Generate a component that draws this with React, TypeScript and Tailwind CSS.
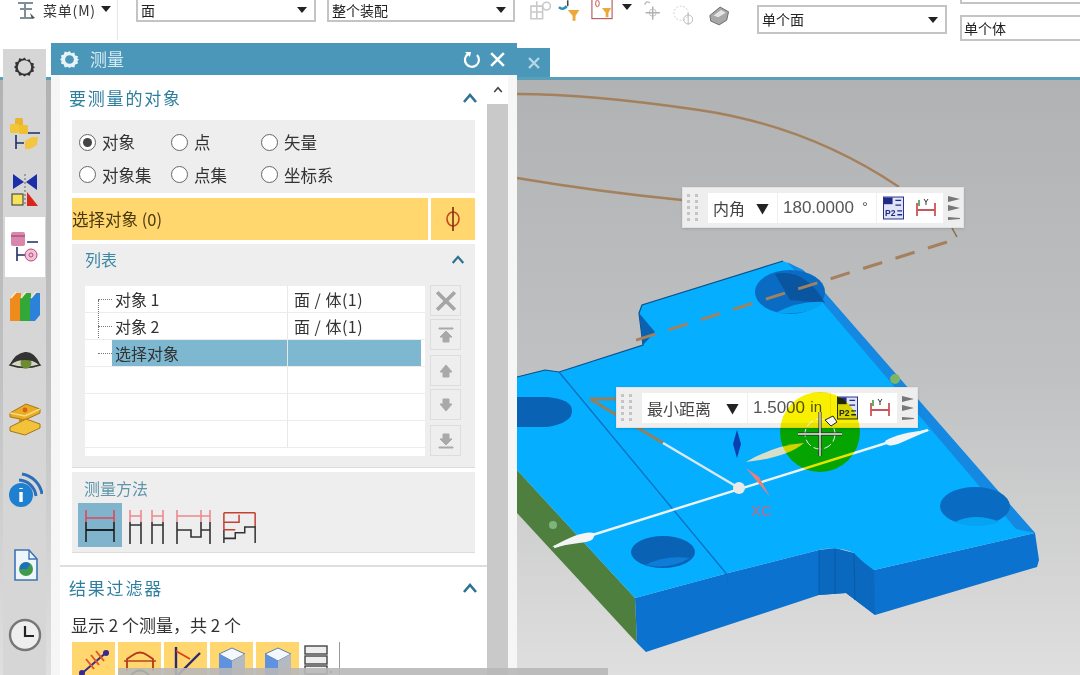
import type { ReactNode } from "react";

const cjk = "font-['Noto_Sans_CJK_SC','Noto_Sans',sans-serif]";

const Icon = ({ children, className = "w-9 h-9", box = "0 0 36 36" }: { children: ReactNode; className?: string; box?: string }) => (
  <svg viewBox={box} className={className} fill="none">{children}</svg>
);

const Caret = ({ className = "" }: { className?: string }) => (
  <svg viewBox="0 0 10 6" className={`w-[10px] h-[6px] ${className}`}><path d="M0 0h10L5 6z" fill="#222" /></svg>
);

const Chevron = ({ className = "w-[16px] h-[10px]", color = "#2d7390" }: { className?: string; color?: string }) => (
  <svg viewBox="0 0 16 10" className={className} fill="none"><path d="M2 9l6-7 6 7" stroke={color} strokeWidth="2.6" /></svg>
);

const Radio = ({ label, checked = false }: { label: string; checked?: boolean }) => (
  <div className="flex items-center gap-[6px]">
    <span className="w-[17px] h-[17px] rounded-full border-[1.5px] border-[#666] bg-white flex items-center justify-center">
      {checked && <span className="w-[9px] h-[9px] rounded-full bg-[#444]" />}
    </span>
    <span className="text-[16.5px] leading-none text-[#333]">{label}</span>
  </div>
);

const Select = ({ label, className }: { label: string; className: string }) => (
  <div className={`shrink-0 border-2 border-[#c4c4c4] bg-white flex items-center justify-between pl-[3px] pr-[7px] text-[14px] text-[#222] ${className}`}>
    <span>{label}</span>
    <Caret />
  </div>
);

const Gear = ({ color = "#333", hole = "#d6d6d6", r = 4.6 }: { color?: string; hole?: string; r?: number }) => (
  <svg viewBox="0 0 20 20" className="w-full h-full">
    <path d="M10 1l2 2.4 3-.7 1 3 3 1-.7 2.6L20 10l-1.7 1.7.7 2.6-3 1-1 3-3-.7L10 19l-2-1.4-3 .7-1-3-3-1 .7-2.6L0 10l1.7-1.7L1 5.7l3-1 1-3 3 .7z" fill={color} />
    <circle cx="10" cy="10" r={r} fill={hole} />
  </svg>
);

const SideBar = () => (
  <div className="absolute left-[3px] top-[49px] bottom-0 w-[43px] bg-[#d6d6d6] flex flex-col items-center">
    <div className="w-[21px] h-[36px] flex items-center"><Gear hole="#d6d6d6" r={6.4} /></div>
    <div className="mt-[32px]">
      <Icon>
        <rect x="8" y="1" width="8" height="8" rx="1.5" fill="#e9b52a" />
        <rect x="3" y="7" width="9" height="9" rx="1.5" fill="#f2c63a" />
        <rect x="12" y="8" width="9" height="9" rx="1.5" fill="#f0c030" />
        <path d="M21 16h12M9 18v14M9 26h8" stroke="#1d2f66" strokeWidth="1.6" />
        <path d="M18 24l7-4h6l-1 8-7 4h-5z" fill="#f4c53e" />
      </Icon>
    </div>
    <div className="mt-[19px]">
      <Icon>
        <path d="M6 2l11 8L6 17zM30 2l-11 8 11 8z" fill="#1c2ea8" />
        <path d="M18 2v32" stroke="#666" strokeDasharray="2 2" />
        <rect x="5" y="22" width="11" height="11" fill="#f6e35a" stroke="#333" />
        <path d="M20 20l11 14H20z" fill="#d8261c" />
      </Icon>
    </div>
    <div className="mt-[9px] w-[40px] h-[60px] ml-[1px] bg-white flex items-center justify-center">
      <Icon>
        <rect x="4" y="3" width="14" height="14" rx="2" fill="#d987ad" />
        <path d="M4 7h14" stroke="#8c3f68" />
        <path d="M20 13h11M10 18v14M10 26h8" stroke="#1d2f66" strokeWidth="1.6" />
        <circle cx="24" cy="26" r="6" fill="#f0c4d6" stroke="#b9447f" />
        <circle cx="24" cy="26" r="2" stroke="#b9447f" />
      </Icon>
    </div>
    <div className="mt-[10px]">
      <Icon>
        <path d="M3 12l5-6h6v28H3z" fill="#ef8a1d" />
        <path d="M13 12l5-6h6v28H13z" fill="#34a836" />
        <path d="M23 12l5-6h5v22l-5 6h-5z" fill="#2b82d9" />
        <path d="M4 11l5-6M14 11l5-6M24 11l5-6" stroke="#f5e9c8" strokeWidth="1.6" />
      </Icon>
    </div>
    <div className="mt-[19px]">
      <Icon>
        <path d="M3 23q14-14 30 0-15 5-30 0z" fill="#d5d8be" stroke="#333" strokeWidth="1.5" />
        <circle cx="19" cy="21" r="5.5" fill="#6d8b32" />
        <path d="M3 22q6-11 15-12t15 12q-15-8-30 0z" fill="#333" />
      </Icon>
    </div>
    <div className="mt-[22px]">
      <Icon>
        <path d="M3 13l16-9 14 5v4L18 20 3 17z" fill="#e9ac24" stroke="#a8741a" />
        <path d="M3 13l15 3 15-7" stroke="#f7dc82" strokeWidth="1.4" />
        <path d="M12 20l10 2" stroke="#c88a1e" strokeWidth="3" />
        <path d="M3 27l16-8 14 5v4l-15 7-15-4z" fill="#f1c23a" stroke="#a8741a" />
        <circle cx="18" cy="10" r="2.4" fill="#d8641c" />
      </Icon>
    </div>
    <div className="mt-[36px]">
      <Icon>
        <circle cx="14" cy="23" r="12" fill="#1f7fd1" />
        <path d="M14 16v1M14 20v10" stroke="#fff" strokeWidth="3.4" />
        <path d="M12 8a18 18 0 0 1 17 16M15 2a24 24 0 0 1 20 20" stroke="#2c6fb8" strokeWidth="3" />
      </Icon>
    </div>
    <div className="mt-[39px]">
      <Icon>
        <path d="M8 3h14l8 9v21H8z" fill="#eef5fb" stroke="#3e74b5" strokeWidth="1.6" />
        <path d="M22 3v9h8" stroke="#3e74b5" strokeWidth="1.4" />
        <circle cx="19" cy="22" r="7" fill="#3f9a4c" />
        <path d="M13 22a6 6 0 0 1 10-5l-3 5z" fill="#1f6fc0" />
      </Icon>
    </div>
    <div className="mt-[34px]">
      <Icon>
        <circle cx="18" cy="18" r="15" fill="#eee" stroke="#777" strokeWidth="2.4" />
        <path d="M18 9v10h9" stroke="#222" strokeWidth="2.2" />
      </Icon>
    </div>
  </div>
);

const Row = ({ name, value, selected = false, tree = false }: { name?: string; value?: string; selected?: boolean; tree?: boolean }) => (
  <div className="h-[27px] flex border-b border-[#ececec] text-[16px] text-[#333] relative">
    {tree && <span className="absolute left-[13px] top-[13px] w-[14px] border-t border-dotted border-[#777]" />}
    <div className={`w-[203px] pl-[30px] flex items-center border-r border-[#e8e8e8] ${selected ? "bg-[linear-gradient(90deg,white_27px,#7db7d0_27px)]" : ""}`}>{name}</div>
    <div className={`w-[133px] pl-[6px] flex items-center tracking-[0.5px] ${selected ? "bg-[#7db7d0]" : ""}`}>{value}</div>
  </div>
);

const ListButton = ({ d, mt }: { d: string; mt: string }) => (
  <div className={`w-[31px] h-[31px] bg-[#eeeeee] border border-[#dddddd] flex items-center justify-center ${mt}`}>
    <svg viewBox="0 0 20 20" className="w-[20px] h-[20px]"><path d={d} fill="#a9a9a9" stroke="#a9a9a9" strokeWidth="1" /></svg>
  </div>
);

const MethodIcon = ({ children, w = 38, className = "" }: { children: ReactNode; w?: number; className?: string }) => (
  <svg viewBox="0 0 38 34" width={w} height="34" fill="none" className={className}>{children}</svg>
);

const ResultBox = ({ children }: { children: ReactNode }) => (
  <div className="w-[43px] h-[40px] bg-[#ffd76e] flex items-start justify-center pt-[3px]">{children}</div>
);

const Cube = () => (
  <Icon className="w-[34px] h-[34px]" box="0 0 34 34">
    <path d="M17 3l13 6-13 7-13-7z" fill="#f4f7fb" stroke="#5a7fb5" />
    <path d="M4 9l13 7v18H4z" fill="#5f93e0" />
    <path d="M30 9l-13 7v18h13z" fill="#b5b9c2" />
  </Icon>
);

const Dialog = () => (
  <div className={`absolute left-[51px] top-[43px] w-[466px] h-[632px] flex flex-col bg-[#f6f6f6] ${cjk}`}>
    <div className="h-[32px] shrink-0 bg-[#4a97b9] flex items-center pl-[9px] pr-[11px] text-white">
      <div className="w-[19px] h-[19px]"><Gear color="#e8f3f8" hole="#4a97b9" /></div>
      <span className="ml-[11px] text-[17px] text-[#d7e9f1]">测量</span>
      <svg viewBox="0 0 20 20" className="ml-auto w-[20px] h-[20px]" fill="none"><path d="M6 5a7 7 0 1 0 9 1" stroke="#fff" strokeWidth="2.2" /><path d="M3 3l6 0-1 5z" fill="#fff" /></svg>
      <svg viewBox="0 0 16 16" className="ml-[7px] w-[17px] h-[17px]" fill="none"><path d="M2 2l12 12M14 2L2 14" stroke="#fff" strokeWidth="2.4" /></svg>
    </div>
    <div className="flex-1 flex min-h-0">
      <div className="ml-[9px] w-[427px] bg-white px-[12px] flex flex-col overflow-hidden">
        <div className="h-[45px] shrink-0 -ml-[3px] -mr-[3px] flex items-center justify-between text-[17px] tracking-[1.8px] text-[#2e7f9f]">
          <span>要测量的对象</span>
          <Chevron />
        </div>
        <div className="h-[73px] shrink-0 bg-[#eeeeee] grid grid-cols-[92px_90px_1fr] grid-rows-2 items-center pl-[7px] pt-[6px] pb-[2px]">
          <Radio label="对象" checked />
          <Radio label="点" />
          <Radio label="矢量" />
          <Radio label="对象集" />
          <Radio label="点集" />
          <Radio label="坐标系" />
        </div>
        <div className="mt-[5px] h-[42px] shrink-0 flex gap-[3px]">
          <div className="w-[356px] bg-[#ffd76e] flex items-center text-[16.5px] text-[#4a3a10]">选择对象 (0)</div>
          <div className="flex-1 bg-[#ffd76e] flex items-center justify-center">
            <svg viewBox="0 0 16 28" className="w-[16px] h-[28px]" fill="none"><ellipse cx="8" cy="14" rx="6" ry="7" stroke="#c2481c" strokeWidth="1.6" /><path d="M8 2v24" stroke="#7a2b12" strokeWidth="1.6" /></svg>
          </div>
        </div>
        <div className="mt-[4px] h-[224px] shrink-0 bg-[#eeeeee] border-b border-[#dcdcdc] pl-[13px] pr-[13px]">
          <div className="h-[42px] -mr-[3px] flex items-center justify-between pb-[12px] text-[16px] text-[#3c87a5]">
            <span>列表</span>
            <Chevron className="w-[14px] h-[9px]" />
          </div>
          <div className="flex">
            <div className="w-[340px] h-[170px] bg-white overflow-hidden relative">
              <span className="absolute left-[13px] top-[14px] h-[54px] border-l border-dotted border-[#777]" />
              <Row name="对象 1" value="面 / 体(1)" tree />
              <Row name="对象 2" value="面 / 体(1)" tree />
              <Row name="选择对象" selected tree />
              <Row /><Row /><Row />
            </div>
            <div className="ml-[5px] -mt-[1px] flex flex-col">
              <div className="w-[31px] h-[31px] bg-[#eeeeee] border border-[#dddddd] flex items-center justify-center">
                <svg viewBox="0 0 20 20" className="w-[22px] h-[22px]" fill="none"><path d="M2 2l16 16M18 2L2 18" stroke="#a5a5a5" strokeWidth="3.4" /></svg>
              </div>
              <ListButton mt="mt-[3px]" d="M3 3h14v1H3zM10 6l6 6h-3v5H7v-5H4z" />
              <ListButton mt="mt-[5px]" d="M10 4l6 7h-3v5H7v-5H4z" />
              <ListButton mt="mt-[3px]" d="M10 16l6-7h-3V4H7v5H4z" />
              <ListButton mt="mt-[5px]" d="M3 17h14v-1H3zM10 14l6-6h-3V3H7v5H4z" />
            </div>
          </div>
        </div>
        <div className="mt-[4px] h-[81px] shrink-0 bg-[#eeeeee] border-b border-[#dcdcdc] pl-[6px]">
          <div className="h-[31px] pl-[6px] flex items-center text-[16px] text-[#5f95aa]">测量方法</div>
          <div className="flex items-start">
            <div className="w-[44px] h-[44px] bg-[#7fb4cc] flex items-center justify-center">
              <MethodIcon>
                <path d="M5 14v20M33 14v20" stroke="#222" strokeWidth="1.6" />
                <path d="M5 2v12M33 2v12M5 10h28" stroke="#e0485a" strokeWidth="1.6" />
                <path d="M5 22h28" stroke="#111" strokeWidth="1.8" />
              </MethodIcon>
            </div>
            <MethodIcon className="ml-[6px] mt-[7px]">
              <path d="M2 12v22M13 12v22M24 12v22M35 12v22M2 15h11M24 15h11" stroke="#333" strokeWidth="1.6" />
              <path d="M2 0v12M13 0v12M24 0v12M35 0v12M2 6h11M24 6h11" stroke="#eb8a90" strokeWidth="1.6" />
            </MethodIcon>
            <MethodIcon className="ml-[9px] mt-[7px]">
              <path d="M2 12v22M35 12v22M2 20h14v7h10v-7h9M26 12v15" stroke="#333" strokeWidth="1.6" />
              <path d="M2 0v12M35 0v12M26 0v12M2 6h33" stroke="#eb8a90" strokeWidth="1.6" />
            </MethodIcon>
            <MethodIcon className="ml-[9px] mt-[7px]" w={36}>
              <path d="M2 20v14M35 16v18M2 29h12v-6h10v-6h11" stroke="#333" strokeWidth="1.6" />
              <path d="M2 2h33M2 2v18M2 12h16V4M35 2v14M2 20h12" stroke="#c44030" strokeWidth="1.6" />
            </MethodIcon>
          </div>
        </div>
        <div className="mt-[12px] -mx-[12px] shrink-0 border-t-2 border-[#dedede]" />
        <div className="h-[42px] shrink-0 flex items-center justify-between -ml-[3px] -mr-[3px] text-[17px] tracking-[1.8px] text-[#2e7f9f]">
          <span>结果过滤器</span>
          <Chevron />
        </div>
        <div className="h-[32px] shrink-0 -ml-[1px] flex items-center text-[17px] text-[#333]">显示 2 个测量，共 2 个</div>
        <div className="mt-[1px] flex gap-[3px] shrink-0">
          <ResultBox>
            <Icon className="w-[36px] h-[34px]" box="0 0 36 34">
              <path d="M4 30L32 6" stroke="#3a2a8c" strokeWidth="2" />
              <path d="M10 14l8 10M15 10l8 10M20 6l8 10" stroke="#e2572a" strokeWidth="2" />
              <circle cx="6" cy="28" r="3" fill="#3a2a8c" /><circle cx="30" cy="8" r="3" fill="#3a2a8c" />
            </Icon>
          </ResultBox>
          <ResultBox>
            <Icon className="w-[36px] h-[34px]" box="0 0 36 34">
              <path d="M5 26V14l6-4q7-5 14 0l6 4v12" stroke="#b2371e" strokeWidth="1.8" />
              <path d="M2 16h32" stroke="#b2371e" strokeWidth="1.4" />
              <path d="M9 30q9-9 18 0" stroke="#222" strokeWidth="2" />
            </Icon>
          </ResultBox>
          <ResultBox>
            <Icon className="w-[36px] h-[34px]" box="0 0 36 34">
              <path d="M8 2v30" stroke="#2c2a70" strokeWidth="2.4" />
              <path d="M10 30L32 8" stroke="#2c2a70" strokeWidth="2.4" />
              <path d="M8 6l14 8" stroke="#d8401e" strokeWidth="1.8" />
            </Icon>
          </ResultBox>
          <ResultBox><Cube /></ResultBox>
          <ResultBox><Cube /></ResultBox>
          <div className="w-[40px] h-[40px] flex">
            <svg viewBox="0 0 30 34" className="w-[30px] h-[34px] mt-[3px]" fill="none">
              <rect x="3" y="1" width="22" height="8" fill="#eee" stroke="#444" strokeWidth="1.4" />
              <rect x="3" y="11" width="22" height="8" fill="#eee" stroke="#444" strokeWidth="1.4" />
              <rect x="3" y="21" width="22" height="8" fill="#eee" stroke="#444" strokeWidth="1.4" />
              <circle cx="29" cy="27" r="1.2" fill="#2d4fb5" />
            </svg>
            <span className="ml-[7px] h-[40px] border-l border-[#999]" />
          </div>
        </div>
      </div>
      <div className="w-[21px] bg-white flex flex-col items-center">
        <div className="h-[29px] flex items-center"><Chevron className="w-[10px] h-[7px]" color="#444" /></div>
        <div className="flex-1 w-full bg-[#c9c9c9]" />
      </div>
    </div>
  </div>
);

const Grip = () => (
  <div className="w-[12px] grid grid-cols-2 gap-x-[3px] gap-y-[3px] ml-[4px]">
    {Array.from({ length: 10 }).map((_, i) => <span key={i} className="w-[3px] h-[3px] bg-[#c4c4c4]" />)}
  </div>
);

const Triple = () => (
  <div className="flex flex-col gap-[3px]">
    <svg viewBox="0 0 12 6" className="w-[12px] h-[6px]"><path d="M0 0l12 3-12 3z" fill="#777" /></svg>
    <svg viewBox="0 0 12 6" className="w-[12px] h-[6px]"><path d="M0 0l12 3-12 3z" fill="#777" /></svg>
    <svg viewBox="0 0 12 6" className="w-[12px] h-[6px]"><path d="M0 3l12 1v1L0 6z" fill="#777" /></svg>
  </div>
);

const P1P2 = () => (
  <svg viewBox="0 0 22 24" className="w-[21px] h-[24px]">
    <rect x="0.5" y="0.5" width="21" height="23" fill="#dfe3f4" stroke="#1f2a86" />
    <rect x="1" y="1" width="9" height="7" fill="#1f2a86" />
    <text x="2" y="20" fontSize="9" fontWeight="700" fill="#1f2a86" fontFamily="Liberation Sans">P2</text>
    <path d="M13 4h6M13 9h6M15 15h5M15 19h5" stroke="#1f2a86" strokeWidth="1.5" />
  </svg>
);

const Span = () => (
  <svg viewBox="0 0 22 20" className="w-[22px] h-[20px]" fill="none">
    <path d="M2 5v13M20 5v13M2 12h18" stroke="#c9565a" strokeWidth="1.8" />
    <path d="M4 8V2" stroke="#3b9b3b" strokeWidth="1.6" />
    <path d="M9 1l2 3 2-3M11 4v3" stroke="#333" strokeWidth="1" />
  </svg>
);

const Widget = ({ label, value, unit, className, labelW, valueW }: { label: string; value: string; unit: string; className: string; labelW: string; valueW: string }) => (
  <div className={`absolute h-[41px] bg-[#eeeeee] border border-[#e2e2e2] shadow-sm flex items-center ${cjk} ${className}`}>
    <Grip />
    <div className="ml-[9px] h-[30px] bg-white flex items-center text-[16px] text-[#444]">
      <div className={`h-full flex items-center justify-between pl-[5px] pr-[8px] border-r border-[#efefef] ${labelW}`}>
        <span>{label}</span>
        <span className="text-[13px] text-[#222]">▼</span>
      </div>
      <div className={`h-full flex items-center justify-between pl-[5px] pr-[8px] border-r border-[#efefef] font-['Liberation_Sans',sans-serif] text-[17px] text-[#555] ${valueW}`}>
        <span>{value}</span>
        <span className="text-[15px]">{unit}</span>
      </div>
      <div className="w-[32px] h-full flex items-center justify-center"><P1P2 /></div>
      <div className="w-[34px] h-full flex items-center justify-center"><Span /></div>
    </div>
    <div className="ml-[5px]"><Triple /></div>
  </div>
);

const Part = () => (
  <svg viewBox="0 80 1080 595" className="block w-full h-full" fill="none">
    <path d="M517 94Q590 94 699 110T899 187" stroke="#a5805c" strokeWidth="2.4" />
    <path d="M517 178Q600 192 682 200" stroke="#a5805c" strokeWidth="2.4" />
    <path d="M952 228l5 9" stroke="#8a6a4c" strokeWidth="1.5" />
    {/* side faces */}
    <path d="M517 470L635 598L637 643L517 513Z" fill="#4e7f3e" />
    <path d="M635 598L728 573L819 550L854 553L874 570L1035 533L1039 560L1037 567L875 615L846 593L819 595L646 652L637 643Z" fill="#0b72cf" />
    <path d="M819 550L835 548L854 553L874 570L875 615L846 593L819 595Z" fill="#0a68bf" />
    <path d="M819 550V595M835 548V594M854 553L855 600" stroke="#095aa6" strokeWidth="1" />
    {/* top face */}
    <path d="M517 377L545 370L559 372L643 345L639 313L642 305L783 261L803 270L820 287L903 385L1035 533L874 570Q862 562 854 553Q838 546 819 550L728 573L635 598L517 470Z" fill="#05aeff" />
    <path d="M517 377L545 370L559 372L643 345L639 313L642 305L783 261" stroke="#0d4f8a" strokeWidth="1.2" />
    <path d="M639 313L643 345L655 332Z" fill="#0b62ae" />
    <path d="M787 262L803 270L820 287L1035 533L1016 529L823 303Z" fill="#1588e2" />
    <path d="M559 372L725 572Q730 578 726 585" stroke="#0d6fc0" strokeWidth="1.3" />
    {/* holes */}
    <ellipse cx="790" cy="292" rx="35" ry="22" fill="#0a6bc2" />
    <path d="M775 274Q805 268 825 303L790 300Z" fill="#0a55a0" />
    <path d="M775 313Q800 300 824 302Q810 316 775 313Z" fill="#06a3f2" />
    <path d="M517 397h30q25 2 25 14t-25 16h-30z" fill="#0a62b5" />
    <ellipse cx="663" cy="552" rx="32" ry="16" fill="#0a62b5" />
    <path d="M645 565Q665 555 690 558Q670 570 645 565Z" fill="#0d7dd8" />
    <ellipse cx="975" cy="506" rx="35" ry="19" fill="#0a6bc2" />
    <path d="M955 522Q975 512 1000 522Q975 530 955 522Z" fill="#06a3f2" />
    {/* dashed leader and small triangle */}
    <path d="M947 242L630 342" stroke="#a5805c" strokeWidth="3" strokeDasharray="20 14" />
    <path d="M590 399H616M590 399L663 443" stroke="#94805c" strokeWidth="3" />
    {/* measure */}
    <path d="M554 547L928 430" stroke="#eef3f5" strokeWidth="2.4" />
    <path d="M663 443L739 488" stroke="#dfe8ee" strokeWidth="2.4" />
    <path d="M552 547Q582 530 594 533Q596 540 586 542Z" fill="#f2f4f5" />
    <path d="M930 430Q900 432 885 441Q886 448 898 444Z" fill="#f2f4f5" />
    <path d="M746 462Q775 445 804 443Q790 455 760 460Z" fill="#d8dfc8" />
    <path d="M737 430L741 444L737 458L733 444Z" fill="#0b3fae" />
    <path d="M746 468L770 497L759 477Z" fill="#e8807a" />
    <circle cx="739" cy="488" r="6" fill="#e9e9e5" />
    <circle cx="553" cy="525" r="4" fill="#7fb57a" />
    <circle cx="895" cy="379" r="5" fill="#7db468" />
    <text x="751" y="516" fontSize="15" fill="#c9657f" fontFamily="Liberation Sans">XC</text>
  </svg>
);

const ToolIcons = () => (
  <div className="ml-[13px] w-[202px] shrink-0 flex items-start gap-[10px]">
    <svg viewBox="0 0 24 24" className="w-[24px] h-[24px] -mr-[4px] -mt-[2px]" fill="none"><path d="M3 8h12v13H3zM9 3v18M3 14h12" stroke="#c9c9c9" strokeWidth="1.6" /><circle cx="19" cy="8" r="4" stroke="#c9c9c9" strokeWidth="1.6" /></svg>
    <svg viewBox="0 0 24 24" className="w-[24px] h-[24px] -mt-[2px]" fill="none"><path d="M2 9q4 4 8-1" stroke="#2b8fb5" strokeWidth="2.6" /><path d="M11 2v6" stroke="#444" strokeWidth="1.6" /><path d="M11 12h12l-4 6v5h-3v-5z" fill="#eda83a" /></svg>
    <div className="flex items-start gap-[9px] -mt-[2px]">
      <svg viewBox="0 0 24 24" className="w-[22px] h-[22px]" fill="none"><rect x="1" y="0.5" width="22" height="22" fill="#fff" stroke="#b5545a" strokeWidth="1.2" /><ellipse cx="7" cy="6" rx="2" ry="3.5" stroke="#c44" /><path d="M12 11h10l-3 5v5h-3v-5z" fill="#eda83a" /></svg>
      <Caret className="w-[8px] h-[5px] mt-[6px]" />
    </div>
    <svg viewBox="0 0 24 24" className="w-[22px] h-[24px] -mt-[2px]" fill="none"><path d="M12 8v15M4 15h16" stroke="#b0b0b0" strokeWidth="1.6" /><circle cx="12" cy="15" r="4" stroke="#bcbcbc" /><path d="M3 6q2-5 6-2" stroke="#bcbcbc" strokeWidth="1.6" /></svg>
    <svg viewBox="0 0 24 24" className="w-[22px] h-[24px] mt-[3px]" fill="none"><circle cx="9" cy="10" r="8" stroke="#c5c5c5" strokeDasharray="2 2" /><circle cx="17" cy="17" r="5" stroke="#b5b5b5" /><path d="M17 10v13" stroke="#b5b5b5" /></svg>
    <svg viewBox="0 0 24 24" className="w-[23px] h-[23px] mt-[4px] ml-[3px]"><path d="M2 12l11-9 9 5-2 9-8 5-9-4z" fill="#a8a8a8" stroke="#666" /><path d="M6 12l8-6 5 3-8 5z" fill="#e5e5e5" /></svg>
  </div>
);

const App = () => (
  <div className="relative w-[1080px] h-[675px] overflow-hidden bg-white blur-[0.6px] font-['Noto_Sans_CJK_SC',sans-serif]">
    <div className={`h-[77px] bg-white overflow-hidden ${cjk}`}>
      <div className="flex items-start w-[1080px]">
        <div className="w-[118px] h-[40px] shrink-0 border-r border-[#e5e5e5] flex items-start pl-[17px]">
          <svg viewBox="0 0 20 20" className="w-[20px] h-[22px]" fill="none"><path d="M1 2h15M3 8h12M8 2v14M3 17h12" stroke="#7f8f9a" strokeWidth="2" /><path d="M13 12l5 5-3 1z" fill="#555" /></svg>
          <span className="ml-[6px] text-[14px] leading-[20px] tracking-[0.8px] text-[#333]">菜单(M)</span>
          <Caret className="ml-[5px] mt-[6px] w-[7px] h-[4px]" />
        </div>
        <Select label="面" className="ml-[18px] w-[180px] h-[22px] border-t-0" />
        <Select label="整个装配" className="ml-[11px] w-[188px] h-[22px] border-t-0" />
        <ToolIcons />
        <Select label="单个面" className="ml-[27px] mt-[5px] w-[190px] h-[29px]" />
        <div className="ml-[13px] shrink-0 flex flex-col">
          <div className="w-[120px] h-[4px] border-b-2 border-l-2 border-[#c4c4c4]" />
          <div className="mt-[11px] w-[120px] h-[26px] border-2 border-r-0 border-[#c4c4c4] flex items-center pl-[2px] text-[14px] text-[#222]">单个体</div>
        </div>
      </div>
    </div>
    <div className="h-[3px] bg-[#5a9fb8]" />
    <div className="h-[595px] bg-linear-to-b from-[#b0b2b4] via-[#c0c1c2] to-[#dfdfdf]">
      <Part />
    </div>

    <div className="absolute left-[517px] top-[48px] w-[33px] h-[29px] bg-[#4a97b9] flex items-center justify-center">
      <svg viewBox="0 0 12 12" className="w-[12px] h-[12px]" fill="none"><path d="M1 1l10 10M11 1L1 11" stroke="#b6d6e3" strokeWidth="2.4" /></svg>
    </div>
    <SideBar />
    <Dialog />
    <Widget label="内角" value="180.0000" unit="°" className="left-[682px] top-[187px] w-[282px]" labelW="w-[70px]" valueW="w-[99px]" />
    <Widget label="最小距离" value="1.5000" unit="in" className="left-[616px] top-[387px] w-[302px]" labelW="w-[106px]" valueW="w-[83px]" />

    <div className="absolute left-[780px] top-[392px] w-[80px] h-[80px] rounded-full bg-[#f8f000] mix-blend-multiply" />
    <svg viewBox="0 0 50 50" className="absolute left-[797px] top-[410px] w-[50px] h-[50px]" fill="none">
      <circle cx="23" cy="24" r="15" stroke="#eef" strokeDasharray="8 3" />
      <path d="M23 2v44M1 24h44" stroke="#222" strokeWidth="3" />
      <path d="M23 2v44M1 24h44" stroke="#f2f2f2" strokeWidth="1.4" />
      <path d="M28 10l8-4 4 6-6 4z" fill="#f5f5f5" stroke="#222" />
    </svg>
    <div className="absolute left-[118px] top-[668px] w-[490px] h-[7px] bg-[#b8b8b8]/90" />
  </div>
);

export default App;
